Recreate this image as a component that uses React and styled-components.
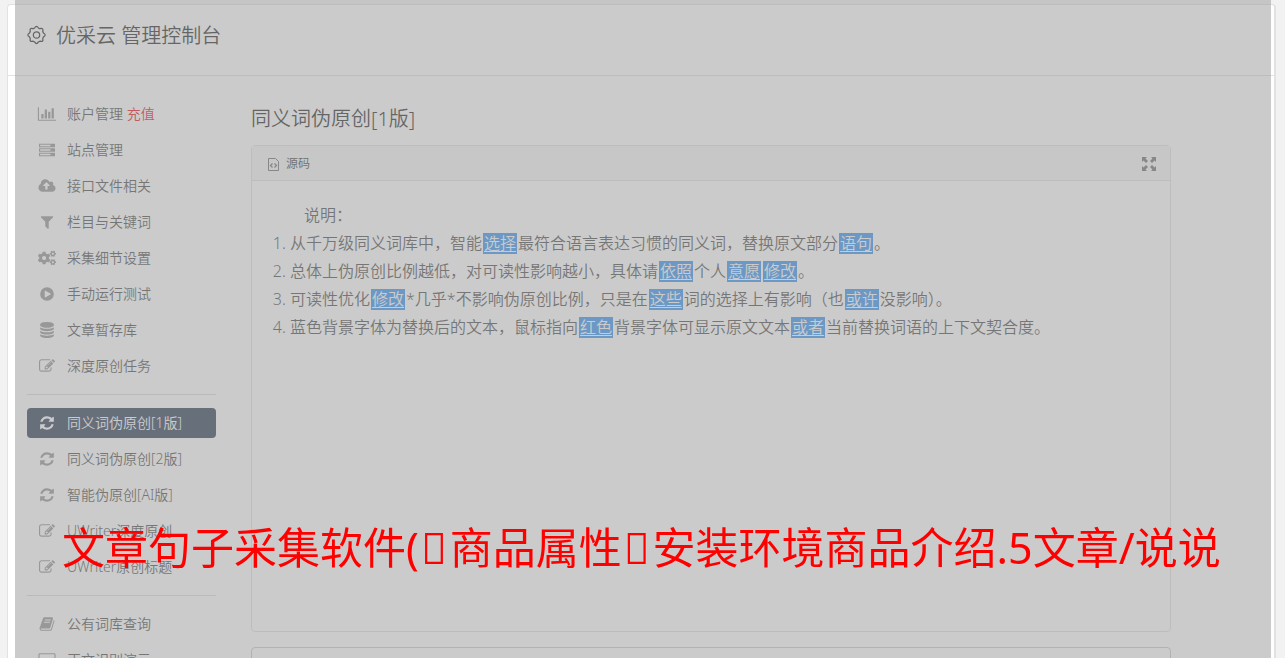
import React from 'react';
import styled, { createGlobalStyle } from 'styled-components';
import { FaCogs } from 'react-icons/fa';

const GlobalStyle = createGlobalStyle`
  * {
    box-sizing: border-box;
  }

  body {
    margin: 0;
    height: 100vh;
    overflow: hidden;
    background: #f2f2f2;
    color: #555;
    font-family: 'Noto Sans', 'Noto Sans CJK SC', sans-serif;
    font-weight: 350;
  }
`

const Card = styled.div`
  margin: 4px 9px 0 7px;
  min-height: 100vh;
  background: #fff;
  border: 1px solid #e2e2e2;
  border-right-width: 2px;
  border-radius: 4px;
`

const Header = styled.header`
  display: flex;
  align-items: center;
  gap: 10px;
  height: 71px;
  padding: 0 19px 8px;
  border-bottom: 1px solid #e2e2e2;
  color: #333;

  & > h1 {
    margin: 0;
    font-size: 20px;
    line-height: 28px;
    font-weight: inherit;
  }
`

const Columns = styled.div`
  display: flex;
  align-items: flex-start;
  gap: 35px;
  padding: 23px 103px 0 19px;
`

const Sidebar = styled.nav`
  flex: 0 0 189px;

  & > hr {
    margin: 13px 0;
    border: none;
    border-top: 1px solid #ddd;
  }
`

const NavLink = styled.a`
  display: flex;
  align-items: center;
  gap: 10px;
  height: 30px;
  margin-bottom: 6px;
  padding: 0 10px;
  border-radius: 4px;
  background: ${props => props.$active ? '#36465f' : 'transparent'};
  color: ${props => props.$active ? '#fff' : '#555'};
  font-size: 14px;
  line-height: 20px;
  text-decoration: none;
  white-space: nowrap;

  & > svg {
    flex: none;
    width: 20px;
    height: 16px;
    fill: ${props => props.$active ? '#fff' : '#999'};
    color: #999;
  }
`

const CogsIcon = styled(FaCogs)`
  padding: 0 1px;
`

const Recharge = styled.span`
  color: #f01828;
`

const Main = styled.main`
  flex: 1;
  min-width: 0;

  & > h2 {
    margin: 6px 0 12px;
    color: #333;
    font-size: 20px;
    line-height: 28px;
    font-weight: inherit;
  }
`

const Editor = styled.section`
  min-height: 487px;
  border: 1px solid #e2e2e2;
  border-radius: 4px;
`

const Toolbar = styled.div`
  display: flex;
  align-items: center;
  justify-content: space-between;
  height: 35px;
  padding: 2px 14px 0;
  background: #f6f6f6;
  border-bottom: 1px solid #e2e2e2;
`

const ToolButton = styled.button`
  display: flex;
  align-items: center;
  gap: 6px;
  padding: 0;
  border: none;
  background: none;
  color: #444;
  font: inherit;
  font-size: 12px;
  line-height: 16px;
`

const Article = styled.div`
  padding: 20px;
  font-size: 16px;
  line-height: 28px;

  & > p {
    margin: 0;
    text-indent: 2em;
  }

  & > ol {
    margin: 0;
    padding-left: 18px;
  }
`

const Word = styled.span`
  margin: 0 1px;
  padding: 0 1px;
  background: #3f98f2;
  color: #fff;
  line-height: 21px;
  display: inline-block;
  text-decoration: underline;
  text-underline-offset: 2px;
`

const Result = styled.textarea`
  display: block;
  width: 100%;
  height: 120px;
  margin-top: 15px;
  border: 1px solid #ccc;
  border-radius: 4px;
  background: #fff;
  resize: none;
`

const Shade = styled.div`
  position: fixed;
  top: 0;
  right: 14px;
  bottom: 0;
  left: 15px;
  background: rgba(151, 151, 151, .5);
  pointer-events: none;
`

const Caption = styled.p`
  position: fixed;
  bottom: 78px;
  left: 62px;
  margin: 0;
  color: #f00;
  font-family: 'Noto Sans', 'Noto Sans CJK SC', sans-serif;
  font-size: 43px;
  font-weight: 400;
  line-height: 64px;
  white-space: nowrap;
  pointer-events: none;
`

const Mark = styled.span`
  padding: 0 3px 0 2px;
`

const paths = {
  chart: ['0 0 2048 1792', 'M640 896v512h-256v-512h256zm384-512v1024h-256v-1024h256zm1024 1152v128h-2048v-1536h128v1408h1920zm-640-896v768h-256v-768h256zm384-384v1152h-256v-1152h256z'],
  server: ['0 0 1792 1792', 'M0 192h1792v384H0zM128 300v168h1152V300zM0 704h1792v384H0zM128 812v168h1152V812zM0 1216h1792v384H0zM128 1324v168h1152v-168z'],
  cloud: ['0 0 1920 1792', 'M1280 864q0-14-9-23l-352-352q-9-9-23-9t-23 9l-351 351q-10 12-10 24 0 14 9 23t23 9h224v352q0 13 9.5 22.5t22.5 9.5h192q13 0 22.5-9.5t9.5-22.5v-352h224q13 0 22.5-9.5t9.5-22.5zm640 288q0 159-112.5 271.5t-271.5 112.5h-1088q-185 0-316.5-131.5t-131.5-316.5q0-130 70-240t188-165q-2-30-2-43 0-212 150-362t362-150q156 0 285.5 87t188.5 231q71-62 166-62 106 0 181 75t75 181q0 76-41 138 130 31 213.5 135.5t83.5 238.5z'],
  filter: ['0 0 1792 1792', 'M1595 295q17 41-14 70l-493 493v742q0 42-39 59-13 5-25 5-27 0-45-19l-256-256q-19-19-19-45v-486l-493-493q-31-29-14-70 17-39 59-39h1280q42 0 59 39z'],
  play: ['0 0 1792 1792', 'M896 128a768 768 0 1 0 0 1536a768 768 0 1 0 0-1536zM1280 951l-544 320q-15 9-32 9-64-8-64-64v-640q0-37 32-56 33-18 64 1l544 320q32 18 32 55t-32 55z'],
  database: ['0 0 1664 1792', 'M832 768q237 0 443-43t325-127v170q0 69-103 128t-280 93.5-385 34.5-385-34.5-280-93.5-103-128v-170q119 84 325 127t443 43zm0 768q237 0 443-43t325-127v170q0 69-103 128t-280 93.5-385 34.5-385-34.5-280-93.5-103-128v-170q119 84 325 127t443 43zm0-384q237 0 443-43t325-127v170q0 69-103 128t-280 93.5-385 34.5-385-34.5-280-93.5-103-128v-170q119 84 325 127t443 43zm0-1152q208 0 385 34.5t280 93.5 103 128v128q0 69-103 128t-280 93.5-385 34.5-385-34.5-280-93.5-103-128v-128q0-69 103-128t280-93.5 385-34.5z'],
  edit: ['0 0 1792 1792', 'M888 1184l116-116-152-152-116 116v56h96v96h56zm440-720q-16-16-33 1l-350 350q-17 17-1 33t33-1l350-350q17-17 1-33zm80 594v190q0 119-84.5 203.5t-203.5 84.5h-832q-119 0-203.5-84.5t-84.5-203.5v-832q0-119 84.5-203.5t203.5-84.5h832q63 0 117 25 15 7 18 23 3 17-9 29l-49 49q-14 14-32 8-23-6-45-6h-832q-66 0-113 47t-47 113v832q0 66 47 113t113 47h832q66 0 113-47t47-113v-126q0-13 9-22l64-64q15-15 35-7t20 29zm-96-738l288 288-672 672h-288v-288zm444 132l-92 92-288-288 92-92q28-28 68-28t68 28l152 152q28 28 28 68t-28 68z'],
  refresh: ['0 0 1792 1792', 'M1639 1056q0 5-1 7-64 268-268 434.5t-478 166.5q-146 0-282.5-55t-243.5-157l-129 129q-19 19-45 19t-45-19-19-45v-448q0-26 19-45t45-19h448q26 0 45 19t19 45-19 45l-137 137q71 66 161 102t187 36q134 0 250-65t186-179q11-17 53-117 8-23 30-23h192q13 0 22.5 9.5t9.5 22.5zm25-800v448q0 26-19 45t-45 19h-448q-26 0-45-19t-19-45 19-45l138-138q-148-137-349-137-134 0-250 65t-186 179q-11 17-53 117-8 23-30 23h-199q-13 0-22.5-9.5t-9.5-22.5v-7q65-268 270-434.5t480-166.5q146 0 284 55.5t245 156.5l130-129q19-19 45-19t45 19 19 45z'],
  book: ['0 0 1792 1792', 'M1703 478q40 57 18 129l-275 906q-19 64-76.5 107.5t-122.5 43.5h-923q-77 0-148.5-53.5t-99.5-131.5q-24-67-2-127 0-4 3-27t4-37q1-8-3-21.5t-3-19.5q2-11 8-21t16.5-23.5 16.5-23.5q23-38 45-91.5t30-91.5q3-10 .5-30t-.5-28q3-11 17-28t17-23q21-36 42-92t25-90q1-9-2.5-32t.5-28q4-13 22-30.5t22-22.5q19-26 42.5-84.5t27.5-96.5q1-8-3-25.5t-2-26.5q2-8 9-18t18-23 17-21q8-12 16.5-30.5t15-35 16-36 19.5-32 26.5-23.5 36-11.5 47.5 5.5l-1 3q38-9 51-9h761q74 0 114 56t18 130l-274 906q-36 119-71.5 153.5t-128.5 34.5h-869q-27 0-38 15-11 16-1 43 24 70 144 70h923q29 0 56-15.5t35-41.5l300-987q7-22 5-57 38 15 59 43zm-1064 2q-4 13 2 22.5t20 9.5h608q13 0 25.5-9.5t16.5-22.5l21-64q4-13-2-22.5t-20-9.5h-608q-13 0-25.5 9.5t-16.5 22.5zm-83 256q-4 13 2 22.5t20 9.5h608q13 0 25.5-9.5t16.5-22.5l21-64q4-13-2-22.5t-20-9.5h-608q-13 0-25.5 9.5t-16.5 22.5z'],
  desktop: ['0 0 1920 1792', 'M160 128h1600q160 0 160 160v1088q0 160-160 160H160Q0 1536 0 1376V288Q0 128 160 128zM160 256q-32 0-32 32v928h1664V288q0-32-32-32z'],
};

const Icon = ({ name }) => {
  const [viewBox, d] = paths[name];
  return (
    <svg viewBox={viewBox} aria-hidden="true">
      <path d={d} fillRule="evenodd" />
    </svg>
  );
}

const groups = [
  [
    { icon: 'chart', label: '账户管理', extra: '充值' },
    { icon: 'server', label: '站点管理' },
    { icon: 'cloud', label: '接口文件相关' },
    { icon: 'filter', label: '栏目与关键词' },
    { icon: 'cogs', label: '采集细节设置' },
    { icon: 'play', label: '手动运行测试' },
    { icon: 'database', label: '文章暂存库' },
    { icon: 'edit', label: '深度原创任务' },
  ],
  [
    { icon: 'refresh', label: '同义词伪原创[1版]', active: true },
    { icon: 'refresh', label: '同义词伪原创[2版]' },
    { icon: 'refresh', label: '智能伪原创[AI版]' },
    { icon: 'edit', label: 'UWriter深度原创' },
    { icon: 'edit', label: 'UWriter原创标题' },
  ],
  [
    { icon: 'book', label: '公有词库查询' },
    { icon: 'desktop', label: '正文识别演示' },
  ],
];

const App = () => {
  return (
    <>
      <GlobalStyle />
      <Card>
        <Header>
          <svg width="19" height="22" viewBox="0 0 18 20" fill="none" stroke="currentColor" strokeWidth="1.200" aria-hidden="true">
            <circle cx="9" cy="9" r="3" />
            <path d="M7.200 2.400Q9-.8 10.800 2.400L12.400 3.100Q15.900 2.100 14.900 5.600L15.600 7.200Q18.800 9 15.600 10.800L14.900 12.400Q15.900 15.900 12.400 14.900L10.800 15.600Q9 18.800 7.200 15.600L5.600 14.900Q2.100 15.900 3.100 12.400L2.400 10.800Q-.8 9 2.400 7.200L3.100 5.600Q2.100 2.100 5.600 3.100z" />
          </svg>
          <h1>优采云 管理控制台</h1>
        </Header>
        <Columns>
          <Sidebar>
            {groups.map((items, index) => (
              <React.Fragment key={index}>
                {index > 0 && <hr />}
                {items.map(item => (
                  <NavLink key={item.label} href="#" $active={item.active}>
                    {item.icon === 'cogs' ? <CogsIcon aria-hidden="true" /> : <Icon name={item.icon} />}
                    <span>
                      {item.label}
                      {item.extra && <Recharge> {item.extra}</Recharge>}
                    </span>
                  </NavLink>
                ))}
              </React.Fragment>
            ))}
          </Sidebar>
          <Main>
            <h2>同义词伪原创[1版]</h2>
            <Editor>
              <Toolbar>
                <ToolButton type="button">
                  <svg width="14" height="16" viewBox="0 0 14 16" fill="none" stroke="#777" aria-hidden="true">
                    <path d="M2.500 2.500h7l3 3v9h-10z" />
                    <path d="M6.500 7.500l-2 2 2 2M8.500 7.500l2 2-2 2" strokeWidth="1.300" />
                  </svg>
                  源码
                </ToolButton>
                <ToolButton type="button" aria-label="全屏">
                  <svg width="14" height="14" viewBox="0 0 14 14" fill="#777" aria-hidden="true">
                    <path d="M0 0h5L3.500 1.500 6 4 4 6 1.500 3.500 0 5zM14 0v5l-1.500-1.500L10 6 8 4l2.500-2.500L9 0zM0 14V9l1.500 1.500L4 8l2 2-2.500 2.500L5 14zM14 14H9l1.500-1.500L8 10l2-2 2.500 2.500L14 9z" />
                  </svg>
                </ToolButton>
              </Toolbar>
              <Article>
                <p>说明：</p>
                <ol>
                  <li>从千万级同义词库中，智能<Word>选择</Word>最符合语言表达习惯的同义词，替换原文部分<Word>语句</Word>。</li>
                  <li>总体上伪原创比例越低，对可读性影响越小，具体请<Word>依照</Word>个人<Word>意愿</Word><Word>修改</Word>。</li>
                  <li>可读性优化<Word>修改</Word>*几乎*不影响伪原创比例，只是在<Word>这些</Word>词的选择上有影响（也<Word>或许</Word>没影响）。</li>
                  <li>蓝色背景字体为替换后的文本，鼠标指向<Word>红色</Word>背景字体可显示原文文本<Word>或者</Word>当前替换词语的上下文契合度。</li>
                </ol>
              </Article>
            </Editor>
            <Result aria-label="原文" />
          </Main>
        </Columns>
      </Card>
      <Shade />
      <Caption>
        文章句子采集软件(<Mark>{'\uE000'}</Mark>商品属性<Mark>{'\uE000'}</Mark>安装环境商品介绍.5文章/说说
      </Caption>
    </>
  );
}

export default App;
